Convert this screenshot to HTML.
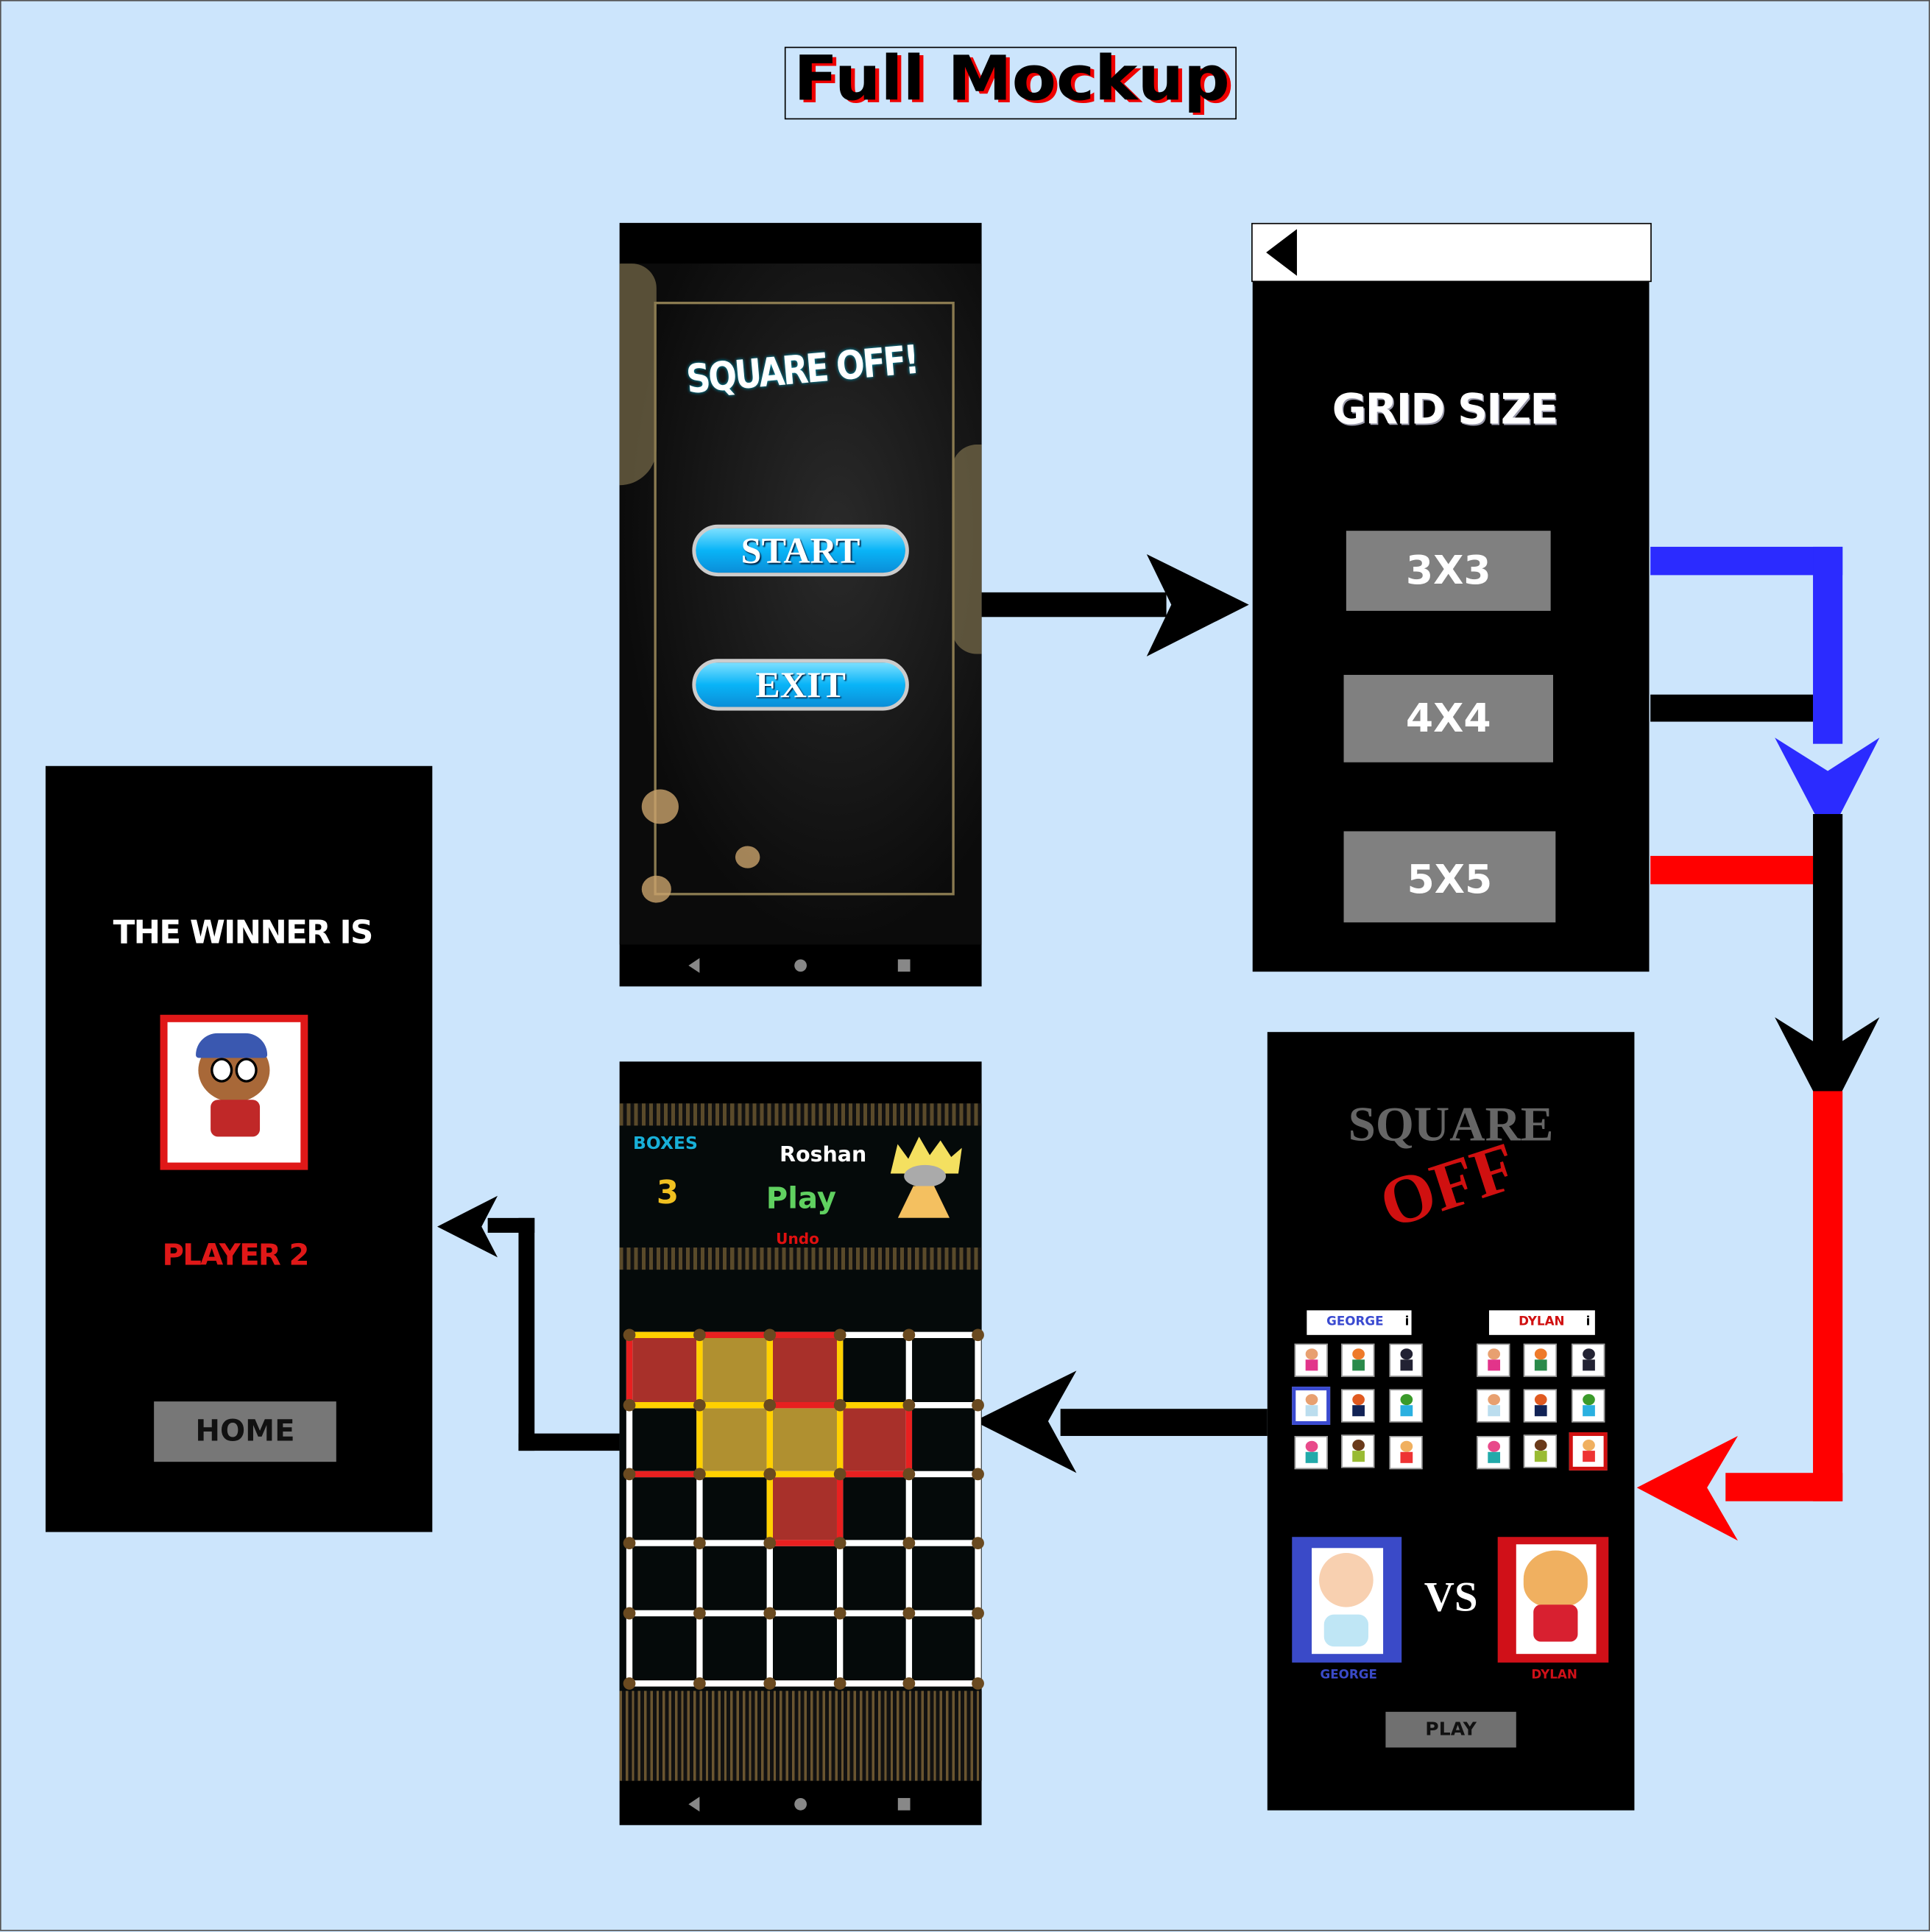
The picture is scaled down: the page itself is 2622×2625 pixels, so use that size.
<!DOCTYPE html>
<html><head><meta charset="utf-8"><style>
html,body{margin:0;padding:0;width:2622px;height:2624px;overflow:hidden;background:#cce5fc}
#w{position:absolute;left:0;top:0;width:1567px;height:1568px;transform:scale(1.67326);transform-origin:0 0;background:#cce5fc;box-sizing:border-box;border:1px solid #555}
.a{position:absolute}
.f{font-family:"DejaVu Sans","Liberation Sans",sans-serif;font-weight:bold}
.btn{position:absolute;background:#808080;color:#fff;text-align:center;font-family:"DejaVu Sans",sans-serif;font-weight:bold}
.av{position:absolute;width:25px;height:25px;background:#fff;border:1px solid #999}
.av i{position:absolute;left:8px;top:3px;width:10px;height:9px;border-radius:50%;background:#e8a070}
.av b{position:absolute;left:8px;top:12px;width:10px;height:9px;background:#3a8}
</style></head><body><div id="w">

<div class="a" style="left:636px;top:37px;width:365px;height:57px;border:1px solid #000"></div>
<div class="a f" style="left:638px;top:34px;width:365px;text-align:center;font-size:50px;color:#000;text-shadow:3px 2px 0 #e00;font-family:'DejaVu Sans',sans-serif;white-space:nowrap;transform:scaleX(1.05)">Full Mockup</div>

<!-- Screen 1 -->
<div class="a" style="left:502px;top:180px;width:294px;height:620px;background:#000"></div>
<div class="a" style="left:502px;top:213px;width:294px;height:553px;background:radial-gradient(ellipse at 60% 40%,#2a2a2a,#0b0b0b 70%)"></div>
<div class="a" style="left:502px;top:213px;width:30px;height:180px;background:#8c7d55;opacity:.6;border-radius:0 20px 30px 0"></div>
<div class="a" style="left:772px;top:360px;width:24px;height:170px;background:#8c7d55;opacity:.6;border-radius:20px 0 0 20px"></div>
<div class="a" style="left:530px;top:244px;width:240px;height:478px;border:2px solid #8a7a50"></div>
<div class="a" style="left:520px;top:640px;width:30px;height:28px;background:#c9a36b;border-radius:50%;opacity:.8"></div>
<div class="a" style="left:596px;top:686px;width:20px;height:18px;background:#c9a36b;border-radius:50%;opacity:.8"></div>
<div class="a" style="left:520px;top:710px;width:24px;height:22px;background:#c9a36b;border-radius:50%;opacity:.8"></div>
<div class="a f" style="left:520px;top:280px;width:260px;text-align:center;font-size:32px;color:#fff;text-shadow:0 0 3px #0ac;transform:rotate(-5deg) scaleX(.85);letter-spacing:-2px;white-space:nowrap">SQUARE OFF!</div>
<div class="a" style="left:561px;top:425px;width:176px;height:42px;border-radius:21px;background:linear-gradient(#7de0ff,#09b4f7 50%,#0a8ed8);border:3px solid #ccc;box-sizing:border-box;color:#fff;font:bold 30px 'Liberation Serif',serif;text-align:center;line-height:38px;text-shadow:1px 1px 1px #024">START</div>
<div class="a" style="left:561px;top:534px;width:176px;height:42px;border-radius:21px;background:linear-gradient(#7de0ff,#09b4f7 50%,#0a8ed8);border:3px solid #ccc;box-sizing:border-box;color:#fff;font:bold 30px 'Liberation Serif',serif;text-align:center;line-height:38px;text-shadow:1px 1px 1px #024">EXIT</div>
<div class="a" style="left:558px;top:777px;width:0;height:0;border-right:9px solid #888;border-top:6px solid transparent;border-bottom:6px solid transparent"></div>
<div class="a" style="left:644px;top:778px;width:10px;height:10px;border-radius:50%;background:#888"></div>
<div class="a" style="left:728px;top:778px;width:10px;height:10px;background:#888"></div>

<svg class="a" style="left:0;top:0" width="1567" height="1568">
<rect x="796" y="480" width="150" height="20" fill="#000"/>
<polygon points="930,449 1013,490 930,532 950,490" fill="#000"/>
<rect x="1339" y="443" width="156" height="23" fill="#2b2bff"/>
<rect x="1471" y="443" width="24" height="160" fill="#2b2bff"/>
<polygon points="1440,598 1483,680 1525,598 1483,625" fill="#2b2bff"/>
<rect x="1339" y="563" width="132" height="22" fill="#000"/>
<rect x="1471" y="660" width="24" height="200" fill="#000"/>
<polygon points="1440,825 1483,908 1525,825 1483,852" fill="#000"/>
<rect x="1339" y="694" width="132" height="23" fill="#f00"/>
<rect x="1471" y="885" width="24" height="333" fill="#f00"/>
<rect x="1400" y="1195" width="95" height="23" fill="#f00"/>
<polygon points="1410,1165 1328,1207 1410,1250 1385,1207" fill="#f00"/>
<rect x="860" y="1143" width="168" height="22" fill="#000"/>
<polygon points="873,1112 790,1153 873,1195 850,1153" fill="#000"/>
<rect x="420" y="1163" width="82" height="14" fill="#000"/>
<rect x="420" y="988" width="13" height="189" fill="#000"/>
<rect x="395" y="988" width="38" height="12" fill="#000"/>
<polygon points="403,970 354,995 403,1020 390,995" fill="#000"/>
</svg>

<!-- Screen 2 -->
<div class="a" style="left:1015px;top:180px;width:323px;height:46px;background:#fff;border:1px solid #000"></div>
<div class="a" style="left:1027px;top:185px;width:0;height:0;border-right:25px solid #000;border-top:19px solid transparent;border-bottom:19px solid transparent"></div>
<div class="a" style="left:1016px;top:227px;width:322px;height:561px;background:#000"></div>
<div class="a f" style="left:1016px;top:312px;width:312px;text-align:center;font-size:34px;color:#fff;letter-spacing:-1px;text-shadow:1px 1px 0 #99a">GRID SIZE</div>
<div class="btn" style="left:1092px;top:430px;width:166px;height:65px;line-height:65px;font-size:32px">3X3</div>
<div class="btn" style="left:1090px;top:547px;width:170px;height:71px;line-height:71px;font-size:32px">4X4</div>
<div class="btn" style="left:1090px;top:674px;width:172px;height:74px;line-height:78px;font-size:32px">5X5</div>

<!-- Screen 4 -->
<div class="a" style="left:1028px;top:837px;width:298px;height:632px;background:#000"></div>
<div class="a" style="left:1028px;top:888px;width:298px;text-align:center;font:bold 40px 'Liberation Serif',serif;color:#666">SQUARE</div>
<div class="a" style="left:1110px;top:930px;width:130px;text-align:center;font:bold 56px 'Liberation Serif',serif;color:#d01010;transform:rotate(-18deg)">OFF</div>
<div class="a" style="left:1060px;top:1063px;width:85px;height:20px;background:#fff;font:bold 10px 'DejaVu Sans',sans-serif;color:#3a4ad0;line-height:20px;text-indent:16px">GEORGE&nbsp;&nbsp;&nbsp;&nbsp;&nbsp;<span style="color:#000">i</span></div>
<div class="a" style="left:1208px;top:1063px;width:86px;height:20px;background:#fff;font:bold 10px 'DejaVu Sans',sans-serif;color:#d01010;line-height:20px;text-indent:24px">DYLAN&nbsp;&nbsp;&nbsp;&nbsp;&nbsp;<span style="color:#000">i</span></div>
<div class="av" style="left:1050px;top:1090px"><i></i><b style="background:#e2348a"></b></div>
<div class="av" style="left:1088px;top:1090px"><i style="background:#ee7a2a"></i><b style="background:#2a8a4a"></b></div>
<div class="av" style="left:1127px;top:1090px"><i style="background:#223"></i><b style="background:#223"></b></div>
<div class="av" style="left:1048px;top:1125px;border:3px solid #3a4ad0"><i></i><b style="background:#bde"></b></div>
<div class="av" style="left:1088px;top:1127px"><i style="background:#e05a20"></i><b style="background:#125"></b></div>
<div class="av" style="left:1127px;top:1127px"><i style="background:#3a9a2a"></i><b style="background:#2ab0e0"></b></div>
<div class="av" style="left:1050px;top:1165px"><i style="background:#e84a8a"></i><b style="background:#2aa"></b></div>
<div class="av" style="left:1088px;top:1164px"><i style="background:#6a3a1a"></i><b style="background:#9b3"></b></div>
<div class="av" style="left:1127px;top:1165px"><i style="background:#f0b060"></i><b style="background:#e33"></b></div>
<div class="av" style="left:1198px;top:1090px"><i></i><b style="background:#e2348a"></b></div>
<div class="av" style="left:1236px;top:1090px"><i style="background:#ee7a2a"></i><b style="background:#2a8a4a"></b></div>
<div class="av" style="left:1275px;top:1090px"><i style="background:#223"></i><b style="background:#223"></b></div>
<div class="av" style="left:1198px;top:1127px"><i></i><b style="background:#bde"></b></div>
<div class="av" style="left:1236px;top:1127px"><i style="background:#e05a20"></i><b style="background:#125"></b></div>
<div class="av" style="left:1275px;top:1127px"><i style="background:#3a9a2a"></i><b style="background:#2ab0e0"></b></div>
<div class="av" style="left:1198px;top:1165px"><i style="background:#e84a8a"></i><b style="background:#2aa"></b></div>
<div class="av" style="left:1236px;top:1164px"><i style="background:#6a3a1a"></i><b style="background:#9b3"></b></div>
<div class="av" style="left:1273px;top:1162px;border:3px solid #d01010"><i style="background:#f0b060"></i><b style="background:#e33"></b></div>
<div class="a" style="left:1048px;top:1247px;width:89px;height:102px;background:#3a4ac8"></div>
<div class="a" style="left:1064px;top:1256px;width:58px;height:86px;background:#fff"></div>
<div class="a" style="left:1070px;top:1260px;width:44px;height:44px;border-radius:50%;background:#f8d0b0"></div>
<div class="a" style="left:1074px;top:1310px;width:36px;height:26px;background:#bfe6f5;border-radius:8px"></div>
<div class="a" style="left:1215px;top:1247px;width:90px;height:102px;background:#d01018"></div>
<div class="a" style="left:1230px;top:1253px;width:65px;height:89px;background:#fff"></div>
<div class="a" style="left:1236px;top:1258px;width:52px;height:46px;border-radius:50% 50% 40% 40%;background:#f0b060"></div>
<div class="a" style="left:1244px;top:1302px;width:36px;height:30px;background:#d82030;border-radius:6px"></div>
<div class="a f" style="left:1140px;top:1278px;width:74px;text-align:center;font-size:34px;color:#fff;font-family:'Liberation Serif',serif">VS</div>
<div class="a" style="left:1048px;top:1354px;width:92px;text-align:center;font:bold 10px 'DejaVu Sans',sans-serif;color:#3a4ac8">GEORGE</div>
<div class="a" style="left:1215px;top:1354px;width:92px;text-align:center;font:bold 10px 'DejaVu Sans',sans-serif;color:#d01018">DYLAN</div>
<div class="btn" style="left:1124px;top:1389px;width:106px;height:29px;line-height:29px;font-size:15px;color:#111;background:#707070">PLAY</div>

<!-- Screen 3 -->
<div class="a" style="left:502px;top:861px;width:294px;height:620px;background:#000"></div>
<div class="a" style="left:502px;top:895px;width:294px;height:550px;background:#050a0a"></div>
<div class="a" style="left:502px;top:895px;width:294px;height:18px;background:repeating-linear-gradient(90deg,#5a4a2a 0 3px,#111 3px 6px)"></div>
<div class="a" style="left:502px;top:1012px;width:294px;height:18px;background:repeating-linear-gradient(90deg,#5a4a2a 0 3px,#111 3px 6px)"></div>
<div class="a" style="left:502px;top:1372px;width:294px;height:73px;background:repeating-linear-gradient(90deg,#6a5530 0 2px,#111 2px 5px),#222"></div>
<div class="a f" style="left:513px;top:920px;font-size:14px;color:#18b0d8">BOXES</div>
<div class="a f" style="left:532px;top:953px;font-size:26px;color:#f0c020">3</div>
<div class="a f" style="left:632px;top:927px;font-size:17px;color:#fff">Roshan</div>
<div class="a f" style="left:621px;top:958px;font-size:24px;color:#60d060">Play</div>
<div class="a f" style="left:629px;top:998px;font-size:12px;color:#e01010">Undo</div>
<div class="a" style="left:722px;top:922px;width:58px;height:30px;background:#f4e060;clip-path:polygon(0 100%,10% 20%,25% 60%,40% 0,55% 50%,70% 10%,85% 55%,100% 30%,95% 100%)"></div>
<div class="a" style="left:733px;top:945px;width:34px;height:18px;border-radius:50%;background:#aaa"></div>
<div class="a" style="left:728px;top:962px;width:42px;height:26px;background:#f4c060;clip-path:polygon(0 100%,30% 0,70% 0,100% 100%)"></div>
<svg class="a" style="left:0;top:0" width="1567" height="1568">
<rect x="510" y="1083" width="57" height="57" fill="#a8302a"/>
<rect x="567" y="1083" width="57" height="57" fill="#b09030"/>
<rect x="624" y="1083" width="57" height="57" fill="#a8302a"/>
<rect x="567" y="1140" width="57" height="56" fill="#b09030"/>
<rect x="624" y="1140" width="57" height="56" fill="#b09030"/>
<rect x="681" y="1140" width="56" height="56" fill="#a8302a"/>
<rect x="624" y="1196" width="57" height="56" fill="#a8302a"/>
<g stroke="#fff" stroke-width="5">
<line x1="510" y1="1083" x2="793" y2="1083"/><line x1="510" y1="1140" x2="793" y2="1140"/><line x1="510" y1="1196" x2="793" y2="1196"/><line x1="510" y1="1252" x2="793" y2="1252"/><line x1="510" y1="1309" x2="793" y2="1309"/><line x1="510" y1="1366" x2="793" y2="1366"/>
<line x1="510" y1="1083" x2="510" y2="1366"/><line x1="567" y1="1083" x2="567" y2="1366"/><line x1="624" y1="1083" x2="624" y2="1366"/><line x1="681" y1="1083" x2="681" y2="1366"/><line x1="737" y1="1083" x2="737" y2="1366"/><line x1="793" y1="1083" x2="793" y2="1366"/>
</g>
<g stroke="#ffd000" stroke-width="5">
<line x1="510" y1="1083" x2="567" y2="1083"/><line x1="510" y1="1140" x2="624" y2="1140"/><line x1="681" y1="1140" x2="737" y2="1140"/><line x1="567" y1="1196" x2="681" y2="1196"/>
<line x1="567" y1="1083" x2="567" y2="1196"/><line x1="624" y1="1083" x2="624" y2="1252"/><line x1="681" y1="1083" x2="681" y2="1196"/>
</g>
<g stroke="#e82020" stroke-width="5">
<line x1="567" y1="1083" x2="681" y2="1083"/><line x1="624" y1="1140" x2="681" y2="1140"/><line x1="510" y1="1196" x2="567" y2="1196"/><line x1="681" y1="1196" x2="737" y2="1196"/><line x1="624" y1="1252" x2="681" y2="1252"/>
<line x1="510" y1="1083" x2="510" y2="1140"/><line x1="737" y1="1140" x2="737" y2="1196"/><line x1="681" y1="1196" x2="681" y2="1252"/>
</g>
<g fill="#6a4a20">
<circle cx="510" cy="1083" r="5"/><circle cx="567" cy="1083" r="5"/><circle cx="624" cy="1083" r="5"/><circle cx="681" cy="1083" r="5"/><circle cx="737" cy="1083" r="5"/><circle cx="793" cy="1083" r="5"/>
<circle cx="510" cy="1140" r="5"/><circle cx="567" cy="1140" r="5"/><circle cx="624" cy="1140" r="5"/><circle cx="681" cy="1140" r="5"/><circle cx="737" cy="1140" r="5"/><circle cx="793" cy="1140" r="5"/>
<circle cx="510" cy="1196" r="5"/><circle cx="567" cy="1196" r="5"/><circle cx="624" cy="1196" r="5"/><circle cx="681" cy="1196" r="5"/><circle cx="737" cy="1196" r="5"/><circle cx="793" cy="1196" r="5"/>
<circle cx="510" cy="1252" r="5"/><circle cx="567" cy="1252" r="5"/><circle cx="624" cy="1252" r="5"/><circle cx="681" cy="1252" r="5"/><circle cx="737" cy="1252" r="5"/><circle cx="793" cy="1252" r="5"/>
<circle cx="510" cy="1309" r="5"/><circle cx="567" cy="1309" r="5"/><circle cx="624" cy="1309" r="5"/><circle cx="681" cy="1309" r="5"/><circle cx="737" cy="1309" r="5"/><circle cx="793" cy="1309" r="5"/>
<circle cx="510" cy="1366" r="5"/><circle cx="567" cy="1366" r="5"/><circle cx="624" cy="1366" r="5"/><circle cx="681" cy="1366" r="5"/><circle cx="737" cy="1366" r="5"/><circle cx="793" cy="1366" r="5"/>
</g>
</svg>
<div class="a" style="left:558px;top:1458px;width:0;height:0;border-right:9px solid #888;border-top:6px solid transparent;border-bottom:6px solid transparent"></div>
<div class="a" style="left:644px;top:1459px;width:10px;height:10px;border-radius:50%;background:#888"></div>
<div class="a" style="left:728px;top:1459px;width:10px;height:10px;background:#888"></div>

<!-- Screen 5 -->
<div class="a" style="left:36px;top:621px;width:314px;height:622px;background:#000"></div>
<div class="a f" style="left:36px;top:742px;width:320px;text-align:center;font-size:26px;color:#fff;letter-spacing:-1px">THE WINNER IS</div>
<div class="a" style="left:129px;top:823px;width:120px;height:126px;background:#e01818"></div>
<div class="a" style="left:135px;top:829px;width:108px;height:114px;background:#fff"></div>
<div class="a" style="left:160px;top:842px;width:58px;height:52px;border-radius:50%;background:#a86838"></div>
<div class="a" style="left:158px;top:838px;width:58px;height:20px;border-radius:30px 30px 4px 4px;background:#3a58b0"></div>
<div class="a" style="left:170px;top:858px;width:14px;height:16px;border-radius:50%;background:#fff;border:2px solid #000"></div>
<div class="a" style="left:190px;top:858px;width:14px;height:16px;border-radius:50%;background:#fff;border:2px solid #000"></div>
<div class="a" style="left:170px;top:892px;width:40px;height:30px;background:#c02828;border-radius:6px"></div>
<div class="a f" style="left:36px;top:1004px;width:308px;text-align:center;font-size:24px;color:#e01818;letter-spacing:-1px">PLAYER 2</div>
<div class="btn" style="left:124px;top:1137px;width:148px;height:49px;line-height:49px;font-size:24px;color:#111;background:#777">HOME</div>

</div></body></html>
